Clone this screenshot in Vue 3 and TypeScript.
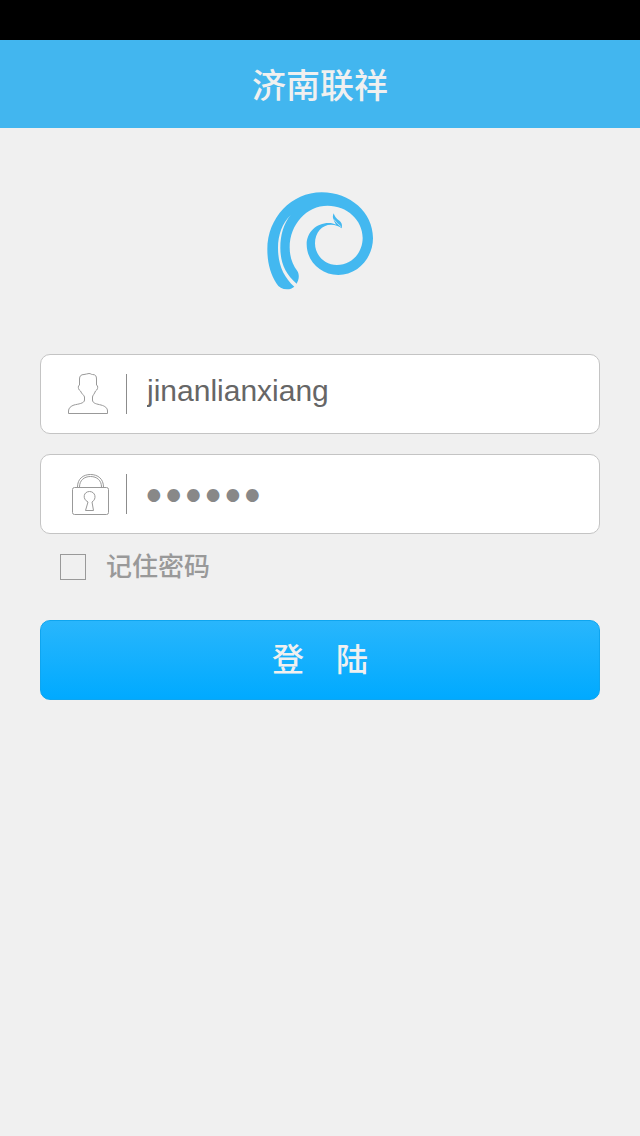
<script setup lang="ts">
import { ref } from 'vue'

const username = ref<string>('jinanlianxiang')
const password = ref<string>('123456')
const remember = ref<boolean>(false)
</script>

<template>
  <div class="page">
    <div class="status-bar"></div>
    <header class="title-bar">
      <h1>济南联祥</h1>
    </header>
    <main class="content">
      <svg class="logo" viewBox="33 36 324 294" role="img" aria-label="济南联祥">
        <path
          fill="#43b8f0"
          d="M96 328C82 328 71 322 64 310C46 281 37 248 37 208C37 114 109 37 200 37C286 37 354 98 354 174C354 235 307 285 250 285C198 285 155 244 155 193C155 157 184 129 221 129C230 129 237 131 243 134C239 125 235 119 234 113C233 109 234 105 236 100C240 114 250 119 257 126C261 131 262 138 260 145C251 138 241 134 228 134C201 134 180 158 180 190C180 226 209 255 246 255C289 255 323 219 323 174C323 120 276 77 218 77C155 77 104 133 104 202C104 230 112 253 127 273C134 284 132 299 125 311C91 283 76 247 76 204C76 164 86 131 107 105C82 130 69 164 69 204C69 252 85 291 118 320C112 325 105 328 96 328Z"
        />
        <path fill="none" stroke="#f0f0f0" stroke-width="2" stroke-linecap="round" d="M237 119C243 127 251 134 258 140" />
      </svg>
      <form class="form" @submit.prevent>
        <div class="field">
          <label class="icon" for="username" aria-label="用户名">
            <svg viewBox="0 0 48 48" fill="none" stroke="#999">
              <path
                d="M4.500 43.500V41C4.500 38 7 36 10 35C14 34 20.500 33.500 20.500 30V27C20.500 25.500 17.500 24 16.500 21C14.500 20 14 17.500 14.500 16L15.500 15V9C15.500 6 17 4.500 20 4.500C22 4.500 23 3.500 25 3.500C27 3.500 27 4.500 28.500 4.500C31.500 4.500 32.500 6 32.500 9V15L33.500 16C34 17.500 33.500 20 31.500 21C30.500 24 28.500 25.500 28.500 27V30C28.500 33.500 33 34 37 35C41 36 43.500 38 43.500 41V43.500Z"
              />
            </svg>
          </label>
          <input id="username" v-model="username" class="text-input username" type="text" autocomplete="off" />
        </div>
        <div class="field">
          <label class="icon" for="password" aria-label="密码">
            <svg viewBox="0 0 48 48" fill="none" stroke="#999">
              <rect x="8.500" y="17.500" width="36" height="27" rx="2" />
              <path d="M13.500 17C13.500 9 19 4.500 26.500 4.500S39.500 9 39.500 17M15.500 17C15.500 10.500 20 6.500 26.500 6.500S37.500 10.500 37.500 17" />
              <path d="M24 32C18 29 19.500 21.500 25.500 21.500S33 29 28 32L29.500 40.500H21.500L24 32Z" />
            </svg>
          </label>
          <input id="password" v-model="password" class="text-input password" type="password" autocomplete="off" />
        </div>
        <label class="remember">
          <input v-model="remember" type="checkbox" />
          <span>记住密码</span>
        </label>
        <button class="login" type="submit">登　陆</button>
      </form>
    </main>
  </div>
</template>

<style>
body {
  margin: 0;
  background: #f0f0f0;
}
</style>

<style scoped>
.page {
  min-height: 100vh;
  background: #f0f0f0;
  font-family: "Liberation Sans", "Noto Sans CJK SC", sans-serif;
}

.status-bar {
  height: 40px;
  background: #000;
}

.title-bar {
  box-sizing: border-box;
  display: flex;
  align-items: center;
  justify-content: center;
  height: 88px;
  padding-top: 4px;
  background: #42b6ef;
}

h1 {
  margin: 0;
  color: #f0f0f0;
  font-size: 34px;
  font-weight: 500;
  line-height: 40px;
}

.content {
  display: flex;
  flex-direction: column;
  align-items: center;
  padding: 64px 40px;
}

.logo {
  display: block;
  width: 108px;
  height: 98px;
}

.form {
  display: flex;
  flex-direction: column;
  align-self: stretch;
  margin-top: 64px;
}

.field {
  box-sizing: border-box;
  display: flex;
  align-items: center;
  height: 80px;
  margin-bottom: 20px;
  padding: 0 20px 0 23px;
  border: 1px solid #c4c4c4;
  border-radius: 10px;
  background: #fff;
}

.icon {
  display: flex;
  align-items: center;
  width: 62px;
  height: 40px;
  border-right: 1px solid #8c8c8c;
}

.icon svg {
  display: block;
  flex: none;
  width: 48px;
  height: 48px;
}

.text-input {
  box-sizing: border-box;
  flex: 1;
  min-width: 0;
  height: 66px;
  margin: 0;
  padding: 0 0 0 20px;
  border: 0;
  outline: 0;
  background: transparent;
  color: #666;
}

.username {
  padding-bottom: 6px;
  font-family: "Liberation Sans", sans-serif;
  font-size: 30px;
}

.password {
  padding-bottom: 4px;
  padding-left: 17px;
  color: #888;
  font-family: Lato, sans-serif;
  font-size: 34px;
}

.remember {
  display: flex;
  align-items: center;
  align-self: flex-start;
  gap: 20px;
  height: 26px;
  margin-left: 20px;
  color: #999;
  font-size: 26px;
  font-weight: 500;
  line-height: 26px;
}

.remember input {
  appearance: none;
  box-sizing: border-box;
  width: 26px;
  height: 26px;
  margin: 0;
  border: 1px solid #999;
}

.remember input:checked {
  background: #42b6ef;
}

.login {
  height: 80px;
  margin-top: 40px;
  padding: 0 0 6px;
  border: 1px solid #0fa5ef;
  border-radius: 10px;
  background: linear-gradient(#29b6fc, #00aaff);
  color: #f0f0f0;
  font-family: inherit;
  font-size: 32px;
  font-weight: 500;
}
</style>
